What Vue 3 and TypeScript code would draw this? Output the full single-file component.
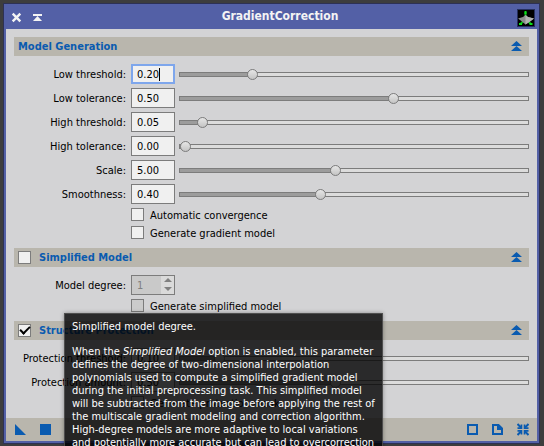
<script setup lang="ts">
import { reactive } from 'vue'

interface Param {
  id: string
  label: string
  value: string
  position: number
  editing?: boolean
}

const model = reactive<Param[]>([
  { id: 'low-threshold', label: 'Low threshold:', value: '0.20', position: 200, editing: true },
  { id: 'low-tolerance', label: 'Low tolerance:', value: '0.50', position: 618 },
  { id: 'high-threshold', label: 'High threshold:', value: '0.05', position: 50 },
  { id: 'high-tolerance', label: 'High tolerance:', value: '0.00', position: 0 },
  { id: 'scale', label: 'Scale:', value: '5.00', position: 445 },
  { id: 'smoothness', label: 'Smoothness:', value: '0.40', position: 400 },
])

const protection = reactive<Param[]>([
  { id: 'protection-threshold', label: 'Protection threshold:', value: '0.10', position: 100 },
  { id: 'protection-amount', label: 'Protection amount:', value: '0.50', position: 445 },
])

const options = reactive({
  convergence: false,
  gradient: false,
  simplified: false,
  simplifiedModel: false,
  structure: true,
  mask: false,
})
</script>

<template>
  <div class="desktop">
    <main class="window">
      <header class="titlebar">
        <button class="tool" aria-label="Close">
          <svg width="11" height="11" viewBox="0 0 11 11"><path d="M1.700 1.700L9.300 9.300M9.300 1.700L1.700 9.300" stroke="#f4f4f4" stroke-width="2.4" /></svg>
        </button>
        <button class="tool" aria-label="Shade">
          <svg width="11" height="11" viewBox="0 0 11 11"><path d="M1 2H10V4H1Z" fill="#f4f4f4" /><path d="M5.500 4L10 9H1Z" fill="#f4f4f4" /></svg>
        </button>
        <h1>GradientCorrection</h1>
        <svg class="logo" width="18" height="18" viewBox="0 0 18 18">
          <rect x=".5" y=".5" width="17" height="17" fill="#000" stroke="#26305e" />
          <path d="M8.500 3V8M8.500 10L3.500 15M8.500 10L14 15" stroke="#08b814" stroke-width="2" />
          <path d="M1 9.500L6 8L8.500 6L11 8L17 9.500L13 12.500L8.500 15.500L5 12.500Z" fill="#8c8c8c" />
          <path d="M8.500 6L11 8L17 9.500L13 12.500L8.500 15.500Z" fill="#b2b2b2" />
          <path d="M7.500 2h2v3h-2zM2 14h3v2H2zM12.500 14h3v2h-3z" fill="#0be018" />
        </svg>
      </header>

      <div class="content">
        <section>
          <div class="bar">
            <h2>Model Generation</h2>
            <button class="tool" aria-label="Collapse Model Generation">
              <svg width="11" height="11" viewBox="0 0 11 11"><path d="M5.500 0L11 5H0ZM5.500 5L11 10H0Z" fill="#0a5bb0" /></svg>
            </button>
          </div>
          <div class="rows">
            <div v-for="p in model" :key="p.id" class="row">
              <label :for="p.id">{{ p.label }}</label>
              <span class="field" :class="{ editing: p.editing }"><input :id="p.id" v-model="p.value" type="text" /></span>
              <input v-model.number="p.position" class="slider" type="range" min="0" max="1000" :aria-label="p.label" :style="{ '--pos': p.position / 1000 }" />
            </div>
          </div>
          <div class="checks">
            <label><input v-model="options.convergence" type="checkbox" /><span>Automatic convergence</span></label>
            <label><input v-model="options.gradient" type="checkbox" /><span>Generate gradient model</span></label>
          </div>
        </section>

        <section>
          <div class="bar">
            <label class="toggle"><input v-model="options.simplified" type="checkbox" /><h2>Simplified Model</h2></label>
            <button class="tool" aria-label="Collapse Simplified Model">
              <svg width="11" height="11" viewBox="0 0 11 11"><path d="M5.500 0L11 5H0ZM5.500 5L11 10H0Z" fill="#0a5bb0" /></svg>
            </button>
          </div>
          <div class="rows">
            <div class="row">
              <label for="degree">Model degree:</label>
              <span class="field spin">
                <input id="degree" type="text" value="1" disabled />
                <span class="steps">
                  <button disabled aria-label="Increase"><svg width="8" height="5" viewBox="0 0 8 5"><path d="M4 0L8 4H0Z" fill="#808080" /></svg></button>
                  <button disabled aria-label="Decrease"><svg width="8" height="5" viewBox="0 0 8 5"><path d="M0 0H8L4 4Z" fill="#808080" /></svg></button>
                </span>
              </span>
            </div>
          </div>
          <div class="checks">
            <label><input v-model="options.simplifiedModel" type="checkbox" disabled /><span>Generate simplified model</span></label>
          </div>
        </section>

        <section>
          <div class="bar">
            <label class="toggle"><input v-model="options.structure" type="checkbox" /><h2>Structure Protection</h2></label>
            <button class="tool" aria-label="Collapse Structure Protection">
              <svg width="11" height="11" viewBox="0 0 11 11"><path d="M5.500 0L11 5H0ZM5.500 5L11 10H0Z" fill="#0a5bb0" /></svg>
            </button>
          </div>
          <div class="rows">
            <div v-for="p in protection" :key="p.id" class="row">
              <label :for="p.id">{{ p.label }}</label>
              <span class="field"><input :id="p.id" v-model="p.value" type="text" /></span>
              <input v-model.number="p.position" class="slider" type="range" min="0" max="1000" :aria-label="p.label" :style="{ '--pos': p.position / 1000 }" />
            </div>
          </div>
          <div class="checks">
            <label><input v-model="options.mask" type="checkbox" /><span>Generate protection mask</span></label>
          </div>
        </section>
      </div>

      <footer class="actions">
        <button class="tool" aria-label="New instance">
          <svg width="11" height="11" viewBox="0 0 11 11"><path d="M0 0L11 11H0Z" fill="#0a5bb0" /></svg>
        </button>
        <button class="tool" aria-label="Apply">
          <svg width="11" height="11" viewBox="0 0 11 11"><path d="M0 0H11V11H0Z" fill="#0a5bb0" /></svg>
        </button>
        <span class="spacer"></span>
        <button class="tool" aria-label="Preferences">
          <svg width="11" height="11" viewBox="0 0 11 11"><path d="M1 1H10V10H1Z" fill="none" stroke="#0a5bb0" stroke-width="2" /></svg>
        </button>
        <button class="tool" aria-label="Browse documentation">
          <svg width="11" height="11" viewBox="0 0 11 11"><path d="M1 1H6.500L10 4.500V10H1Z" fill="none" stroke="#0a5bb0" stroke-width="2" /><path d="M5 1H7L10.500 4.500V6H5Z" fill="#0a5bb0" /></svg>
        </button>
        <button class="tool" aria-label="Reset">
          <svg width="12" height="13" viewBox="0 0 12 13"><path d="M.5 1L4 4.500M11.500 1L8 4.500M.5 12L4 8.500M11.500 12L8 8.500" stroke="#0a5bb0" stroke-width="2" /><path d="M5.300 1.500V6H.5V4.300H3.600V1.500ZM6.700 1.500V6H11.500V4.300H8.400V1.500ZM5.300 11.500V7H.5V8.700H3.600V11.500ZM6.700 11.500V7H11.500V8.700H8.400V11.500Z" fill="#0a5bb0" /></svg>
        </button>
      </footer>
    </main>

    <aside class="tooltip" role="tooltip">
      <p>Simplified model degree.</p>
      <p>When the <em>Simplified Model</em> option is enabled, this parameter defines the degree of two-dimensional interpolation polynomials used to compute a simplified gradient model during the initial preprocessing task. This simplified model will be subtracted from the image before applying the rest of the multiscale gradient modeling and correction algorithm. High-degree models are more adaptive to local variations and potentially more accurate but can lead to overcorrection</p>
    </aside>
  </div>
</template>

<style>
body {
  margin: 0;
  background: #3d3d3d;
}
</style>

<style scoped>
* {
  box-sizing: border-box;
}
.desktop {
  position: relative;
  height: 100vh;
  overflow: hidden;
  padding: 4px 5px 3px 4px;
  background: #3d3d3d;
  color: #000;
  font: 11px/14px "DejaVu Sans Condensed", "DejaVu Sans", sans-serif;
}
.window {
  display: flex;
  flex-direction: column;
  border: solid #5360a6;
  border-width: 0 2px 2px;
  background: #d3d3d5;
  box-shadow: 0 0 0 1px #2d3154;
}
h1,
h2,
p {
  margin: 0;
}
.tool {
  display: block;
  padding: 0;
  border: 0;
  background: none;
}
.tool svg,
.logo {
  display: block;
}
.titlebar {
  display: flex;
  align-items: center;
  gap: 10px;
  height: 25px;
  padding: 2px 2px 0 5px;
  background: #5360a6;
}
h1 {
  flex: 1;
  padding-bottom: 4px;
  color: #f4f4f4;
  font-size: 12px;
  line-height: 16px;
  text-align: center;
}
.content {
  display: flex;
  flex-direction: column;
  gap: 9px;
  padding: 8px 8px 9px;
}
.bar {
  display: flex;
  align-items: center;
  justify-content: space-between;
  height: 19px;
  padding: 0 7px 0 4px;
  background: #b9b6ad;
}
h2 {
  color: #0a5bb0;
  font-size: 11px;
  line-height: 15px;
}
.toggle {
  display: flex;
  align-items: center;
  gap: 8px;
}
.rows {
  display: grid;
  gap: 4px;
  padding-top: 8px;
}
.row {
  display: grid;
  grid-template-columns: 112px 44px 1fr;
  align-items: center;
  height: 20px;
}
.row label {
  padding-top: 2px;
  text-align: right;
}
.field {
  position: relative;
  display: flex;
  height: 20px;
  margin-left: 5px;
  margin-right: -5px;
  border: 1px solid #7c7c7c;
  background: #f0f0f0;
}
.field input {
  width: 100%;
  min-width: 0;
  padding: 2px 5px 0;
  border: 0;
  outline: 0;
  background: none;
  color: #000;
  font: inherit;
}
.editing {
  border: 2px solid #7ea6ec;
}
.editing input {
  padding: 2px 4px 0;
}
.editing::after {
  content: "";
  position: absolute;
  top: 2px;
  left: 26px;
  width: 1px;
  height: 13px;
  background: #000;
}
.spin {
  background: #c9c9c9;
}
.spin input {
  color: #808080;
}
.steps {
  display: grid;
  flex: none;
  width: 13px;
  background: #dadada;
}
.steps button {
  display: grid;
  place-items: center;
  padding: 0;
  border: 0;
  background: none;
}
.slider {
  appearance: none;
  height: 11px;
  margin: 0 0 0 9px;
  background: none;
}
.slider::-webkit-slider-runnable-track {
  height: 5px;
  border: 1px solid #7c7c7c;
  background: linear-gradient(to right, #9c9c9c calc(5px + (100% - 11px) * var(--pos)), #dcdcdc 0);
}
.slider::-webkit-slider-thumb {
  appearance: none;
  width: 11px;
  height: 11px;
  margin-top: -4px;
  border: 1px solid #7c7c7c;
  border-radius: 50%;
  background: linear-gradient(#e6e6e6, #c4c4c4);
}
.checks {
  display: grid;
  gap: 5px;
  padding: 4px 0 0 117px;
}
.checks label {
  display: flex;
  align-items: center;
  gap: 6px;
  height: 13px;
}
.checks span {
  padding-top: 2px;
}
input[type="checkbox"] {
  appearance: none;
  flex: none;
  width: 13px;
  height: 13px;
  margin: 0;
  border: 1px solid #7c7c7c;
  background: #f0f0f0;
}
input[type="checkbox"]:disabled {
  background: #cbcbcb;
}
input[type="checkbox"]:checked {
  display: grid;
  place-items: center;
}
input[type="checkbox"]:checked::before {
  content: "";
  width: 8px;
  height: 4px;
  margin-bottom: 3px;
  border: solid #000;
  border-width: 0 0 2px 2px;
  transform: rotate(-45deg);
}
.actions {
  display: flex;
  align-items: center;
  gap: 14px;
  height: 23px;
  padding: 0 8px 0 9px;
  background: #b9b6ad;
}
.spacer {
  flex: 1;
}
.tooltip {
  position: absolute;
  top: 313px;
  left: 64px;
  width: 319px;
  padding: 6px 7px 20px;
  border: 1px solid rgba(96, 96, 96, 0.7);
  background: rgba(0, 0, 0, 0.8);
  box-shadow: 0 0 4px rgba(0, 0, 0, 0.35);
  color: #fff;
  line-height: 13px;
}
.tooltip p + p {
  margin-top: 12px;
}
</style>
